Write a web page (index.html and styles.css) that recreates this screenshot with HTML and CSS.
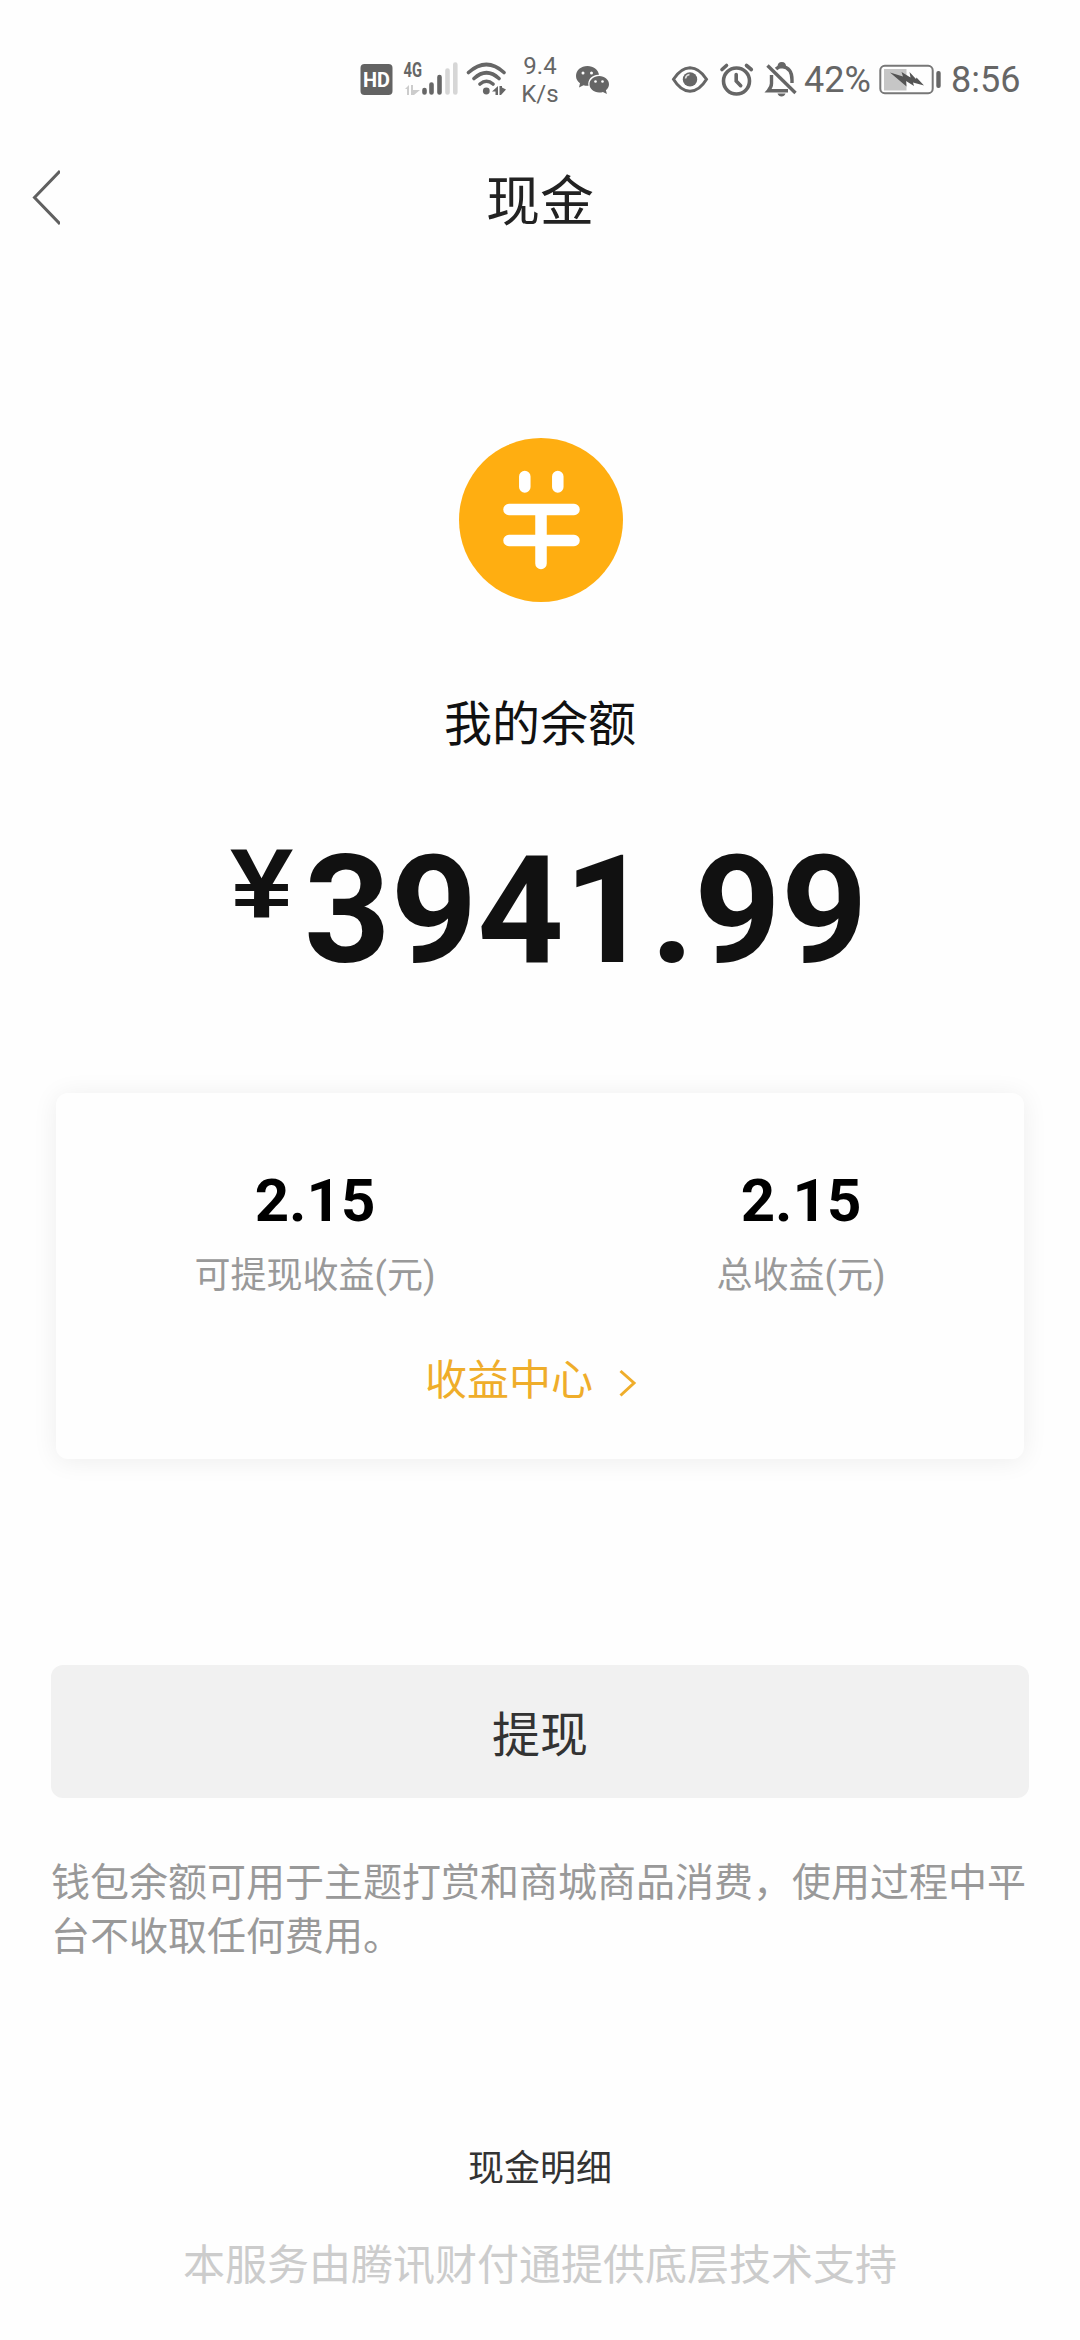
FILE: index.html
```html
<!DOCTYPE html>
<html lang="zh-CN">
<head>
<meta charset="utf-8">
<title>现金</title>
<link rel="stylesheet" href="styles.css">
</head>
<body>
<div class="statusbar">
  <svg class="network" width="100" height="60" viewBox="358 50 100 60">
    <rect x="360.5" y="64" width="32" height="31" rx="4" fill="#636363"/>
    <text class="hd" x="363" y="87" textLength="27" lengthAdjust="spacingAndGlyphs">HD</text>
    <text class="gen" x="403.500" y="77" textLength="18.500" lengthAdjust="spacingAndGlyphs">4G</text>
    <path d="M405 89l4-4v10h-2v-6zM411 85h2v5h7l-6 5h-3z" fill="#ccc"/>
    <g stroke-width="4.600" stroke-linecap="round" stroke="#666">
      <path d="M424.500 90v2.500M431.500 84.500v8M439.500 77v15.500"/>
      <path stroke="#d6d6d6" d="M447.500 70.500v22M455.300 64.500v28"/>
    </g>
  </svg>
  <svg class="wifi" width="42" height="40" viewBox="466 60 42 40">
    <g fill="none" stroke="#666" stroke-width="3.600" stroke-linecap="round">
      <path d="M468.500 72.500Q486.500 56.500 504 72.500M474 78.500Q486.500 67 499 78.500M480 84Q486.500 78.500 493 84"/>
    </g>
    <circle cx="486.300" cy="91" r="3.400" fill="#666"/>
    <path d="M492 91.500l6-5.500v9h-2.500v-3.500zM499.500 86h2.500v1.500l4 2-5 5.500h-1.500z" fill="#666"/>
  </svg>
  <div class="speed"><span>9.4</span><span>K/s</span></div>
  <svg class="wechat" width="36" height="32" viewBox="574 63 36 32">
    <path fill="#666" d="M587.500 65C581 65 576 69.300 576 75c0 3 1.500 5.500 4 7.300L579 86.500l4.500-2.300q2.500.7 5 .5c-1.500-6 4-11.500 10.500-11-.8-5-5.500-8.700-11.500-8.700z"/>
    <path fill="#666" d="M599.200 75c-5.500 0-9.700 3.700-9.700 8.300s4.200 8.200 9.700 8.200q2 0 3.700-.6l4 2-1-3.700c2-1.500 3.100-3.600 3.100-5.900 0-4.600-4.300-8.300-9.800-8.300z"/>
    <g fill="#fff"><circle cx="583" cy="72" r="1.500"/><circle cx="591.500" cy="72" r="1.500"/><circle cx="595.500" cy="80.500" r="1.300"/><circle cx="602.500" cy="80.500" r="1.300"/></g>
  </svg>
  <svg class="alerts" width="128" height="38" viewBox="670 61 128 38">
    <g fill="none" stroke="#666" stroke-width="3">
      <path d="M673.500 79.300Q680.500 68 690 67.700Q699.500 68 706.500 79.300Q699.500 91 690 91.300Q680.500 91 673.500 79.300z"/>
      <circle cx="736.500" cy="81" r="13" stroke-width="3.600"/>
      <path stroke-width="3.600" stroke-linecap="round" d="M736.200 74.500V81l4.500 4.700M722 69.500l4.500-4M746.500 65.500l4.800 4"/>
      <path stroke-width="3.400" d="M771.500 75v8.500q0 3.500-3.300 7.300H788M776 69q2.500-2.500 6-2.500 10 1 10 13.500v3"/>
      <path stroke-width="3" d="M779 67q0-3.500 2.800-3.500t2.800 3.500"/>
      <path stroke-width="3.400" d="M767.500 65.500L795.500 93"/>
    </g>
    <circle cx="690" cy="79.400" r="7.200" fill="#666"/>
    <path d="M685.500 78.500q.5-3.500 4-4" fill="none" stroke="#ddd" stroke-width="1.600"/>
    <path d="M777.500 93.500h8q-1 3-4 3t-4-3z" fill="#666"/>
  </svg>
  <span class="pct">42%</span>
  <svg class="battery" width="64" height="32" viewBox="878 64 64 32">
    <rect x="880.300" y="65.800" width="52.400" height="27.400" rx="4.500" fill="none" stroke="#777" stroke-width="2"/>
    <rect x="884" y="69" width="22.500" height="21.500" fill="#c6c6c6"/>
    <path fill="#555" d="M890 72.500l13 4-1.500-4.500 9 5.500-1-5.500 6.500 7 .5-1.500L924 85.500l-11-3 1 3.500-8-5 .5 5.500z"/>
    <rect x="936.300" y="71" width="4.400" height="17" rx="2" fill="#666"/>
  </svg>
  <span class="clock">8:56</span>
</div>

<header class="navbar">
  <svg class="back" width="28" height="56" viewBox="0 0 28 56"><path d="M28 2L2.500 28.500 28 55" fill="none" stroke="#606060" stroke-width="3"/></svg>
  <h1 class="title">现金</h1>
</header>

<main>
  <svg class="coin" width="164" height="164" viewBox="0 0 164 164">
    <circle cx="82" cy="82" r="82" fill="#ffae11"/>
    <g stroke="#fff" stroke-linecap="round" fill="none" stroke-width="11.500">
      <path d="M65.800 38.500v10.500M98.800 38.500v10.500"/>
      <path d="M50 71.500h65M50 102.500h65M82 71.500v54"/>
    </g>
  </svg>
  <div class="caption">我的余额</div>
  <div class="amount"><span class="yen">¥</span><span class="digits">3941.99</span></div>

  <section class="card">
    <div class="stats">
      <div class="stat"><strong>2.15</strong><span>可提现收益(元)</span></div>
      <div class="stat"><strong>2.15</strong><span>总收益(元)</span></div>
    </div>
    <a class="more">收益中心<svg width="20" height="30" viewBox="0 0 20 30"><path d="M2.500 3L16 15 2.500 27.500" fill="none" stroke="#efad2a" stroke-width="3"/></svg></a>
  </section>

  <button class="withdraw">提现</button>
  <p class="note">钱包余额可用于主题打赏和商城商品消费，使用过程中平台不收取任何费用。</p>
</main>
<footer>
  <a class="detail">现金明细</a>
  <div class="provider">本服务由腾讯财付通提供底层技术支持</div>
</footer>
</body>
</html>
```

FILE: styles.css
```css
* { box-sizing: border-box; }
body {
  margin: 0;
  width: 1080px;
  height: 2340px;
  overflow: hidden;
  background: #fefefe;
  color: #111;
  font-family: "Noto Sans CJK SC", sans-serif;
}
svg { display: block; flex: none; }

.statusbar {
  height: 120px;
  padding: 40px 0 0 358px;
  display: flex;
  align-items: center;
  color: #666;
  font-family: Roboto, sans-serif;
}
.hd { font: 700 21px Roboto, sans-serif; fill: #fff; }
.gen { font: 700 20px Roboto, sans-serif; fill: #666; }
.wifi { margin-left: 8px; }
.speed {
  width: 40px;
  margin: 0 0 1px 12px;
  display: flex;
  flex-direction: column;
  align-items: center;
  font-size: 24px;
  line-height: 28px;
}
.wechat { margin-left: 14px; }
.alerts { margin-left: 60px; }
.pct { width: 66px; margin-left: 6px; font-size: 36px; line-height: 40px; }
.battery { margin-left: 8px; }
.clock { margin-left: 9px; font-size: 36px; line-height: 40px; }

.navbar {
  height: 156px;
  display: grid;
  grid-template-columns: 120px 1fr 120px;
  align-items: center;
}
.back { margin: -2px 0 0 32px; }
.title {
  margin: 0;
  text-align: center;
  font-size: 54px;
  font-weight: 400;
  line-height: 80px;
  color: #222;
}

main {
  display: flex;
  flex-direction: column;
  align-items: center;
  padding: 162px 51px 0;
}
.coin { margin-left: 2px; }
.caption {
  margin-top: 88px;
  font-size: 48px;
  line-height: 60px;
}
.amount {
  display: flex;
  align-items: flex-start;
  align-self: flex-start;
  margin: 71px 0 0 179px;
  font-family: Roboto, sans-serif;
}
.yen {
  width: 74px;
  margin-top: 12px;
  font: 700 99px/100px "Liberation Sans", sans-serif;
  transform: scaleX(1.15);
  transform-origin: 0 0;
}
.digits { font-size: 151px; font-weight: 700; line-height: 180px; }

.card {
  width: 968px;
  height: 366px;
  margin-top: 92px;
  padding-top: 72px;
  border-radius: 12px;
  box-shadow: 0 2px 26px rgba(0, 0, 0, 0.07);
  display: flex;
  flex-direction: column;
}
.stats { display: grid; grid-template-columns: 518px 454px; }
.stat { display: flex; flex-direction: column; align-items: center; }
.stat strong {
  font: 700 60px/72px Roboto, sans-serif;
  color: #000;
}
.stat span {
  margin-top: 12px;
  font: 400 36px/54px Roboto, "Noto Sans CJK SC", sans-serif;
  color: #999;
}
.more {
  display: flex;
  align-items: center;
  margin: 44px 0 0 369px;
  font-size: 42px;
  line-height: 60px;
  color: #efad2a;
}
.more svg { margin: 11px 0 0 25px; }

.withdraw {
  width: 978px;
  height: 133px;
  margin-top: 206px;
  padding: 0 0 2px;
  border: 0;
  border-radius: 12px;
  background: #f1f1f1;
  color: #333;
  font: 400 48px/72px "Noto Sans CJK SC", sans-serif;
}
.note {
  width: 978px;
  margin: 54px 0 0;
  font-size: 39px;
  line-height: 54px;
  color: #999;
}

footer {
  display: flex;
  flex-direction: column;
  align-items: center;
  padding-top: 178px;
}
.detail { font-size: 36px; line-height: 54px; color: #333; }
.provider { margin-top: 38px; font-size: 42px; line-height: 64px; color: #ccc; }
```
